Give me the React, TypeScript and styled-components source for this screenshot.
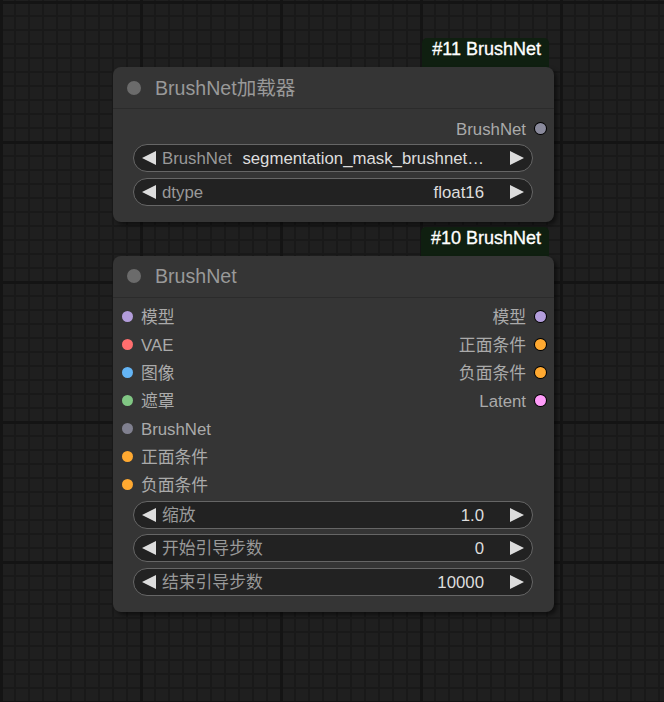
import React from "react"
import styled, { createGlobalStyle } from "styled-components"

const FONT = `"Liberation Sans", Arial, "Noto Sans CJK SC", sans-serif`

type SlotInfo = { name: string; color: string }
type WidgetInfo = { label: string; value: string }

type NodeInfo = {
    id: number
    badge: string
    title: string
    inputs: SlotInfo[]
    outputs: SlotInfo[]
    widgets: WidgetInfo[]
}

const nodes: NodeInfo[] = [
    {
        id: 11,
        badge: "BrushNet",
        title: "BrushNet加载器",
        inputs: [],
        outputs: [{ name: "BrushNet", color: "#8a8a9c" }],
        widgets: [
            { label: "BrushNet", value: "segmentation_mask_brushnet…" },
            { label: "dtype", value: "float16" },
        ],
    },
    {
        id: 10,
        badge: "BrushNet",
        title: "BrushNet",
        inputs: [
            { name: "模型", color: "#b39ddb" },
            { name: "VAE", color: "#ff6e6e" },
            { name: "图像", color: "#64b5f6" },
            { name: "遮罩", color: "#81c784" },
            { name: "BrushNet", color: "#80808f" },
            { name: "正面条件", color: "#ffa931" },
            { name: "负面条件", color: "#ffa931" },
        ],
        outputs: [
            { name: "模型", color: "#b39ddb" },
            { name: "正面条件", color: "#ffa931" },
            { name: "负面条件", color: "#ffa931" },
            { name: "Latent", color: "#ff9cf9" },
        ],
        widgets: [
            { label: "缩放", value: "1.0" },
            { label: "开始引导步数", value: "0" },
            { label: "结束引导步数", value: "10000" },
        ],
    },
]

const Arrow = ({ dir }: { dir: "left" | "right" }) => (
    <ArrowIcon width="14" height="14" viewBox="0 0 14 14">
        <polygon points={dir === "left" ? "14,0 0,7 14,14" : "0,0 14,7 0,14"} fill="#ddd" />
    </ArrowIcon>
)

const GraphNode = ({ node }: { node: NodeInfo }) => (
    <NodeGroup>
        <Badge>#{node.id} {node.badge}</Badge>
        <NodeCard>
            <TitleBar>
                <TitleDot />
                <TitleText>{node.title}</TitleText>
            </TitleBar>
            <NodeBody>
                <SlotGrid>
                    <SlotColumn>
                        {node.inputs.map((s, i) => (
                            <InputSlot key={i}>
                                <SlotDot $color={s.color} />
                                <SlotLabel>{s.name}</SlotLabel>
                            </InputSlot>
                        ))}
                    </SlotColumn>
                    <SlotColumn>
                        {node.outputs.map((s, i) => (
                            <OutputSlot key={i}>
                                <SlotLabel>{s.name}</SlotLabel>
                                <SlotDot $color={s.color} $output />
                            </OutputSlot>
                        ))}
                    </SlotColumn>
                </SlotGrid>
                <WidgetList>
                    {node.widgets.map((w, i) => (
                        <Widget key={i}>
                            <Arrow dir="left" />
                            <WidgetLabel>{w.label}</WidgetLabel>
                            <WidgetValue>{w.value}</WidgetValue>
                            <Arrow dir="right" />
                        </Widget>
                    ))}
                </WidgetList>
            </NodeBody>
        </NodeCard>
    </NodeGroup>
)

export default function App() {
    return (
        <>
            <GlobalStyle />
            <Canvas>
                <NodeStack>
                    {nodes.map((n) => (
                        <GraphNode key={n.id} node={n} />
                    ))}
                </NodeStack>
            </Canvas>
        </>
    )
}

const GlobalStyle = createGlobalStyle`
    html, body {
        margin: 0;
        padding: 0;
        background: #1f1f1f;
    }
`

const Canvas = styled.div`
    width: 664px;
    height: 702px;
    overflow: hidden;
    box-sizing: border-box;
    padding: 38px 0 0 113px;

    font-family: ${FONT};

    background-color: #1f1f1f;
    background-image:
        linear-gradient(to right, #141414 3px, transparent 3px),
        linear-gradient(to bottom, #141414 3px, transparent 3px),
        linear-gradient(to right, #191919 2px, transparent 2px),
        linear-gradient(to bottom, #191919 2px, transparent 2px);
    background-size: 140px 140px, 140px 140px, 14px 14px, 14px 14px;
    background-position: 0 0, 0 1px, 0 0, 0 1px;
`

const NodeStack = styled.div`
    display: flex;
    flex-direction: column;
    gap: 5px;
    width: 441px;
`

const NodeGroup = styled.div`
    position: relative;
    padding-top: 29px;
`

const Badge = styled.div`
    position: absolute;
    top: 0;
    right: 5px;
    height: 40px;
    padding: 0 8px 0 10px;
    box-sizing: border-box;

    border-radius: 5px;
    background: #0f1f10;

    color: #fff;
    font-size: 18px;
    line-height: 22px;
    white-space: nowrap;
    -webkit-text-stroke: 0.3px #fff;
`

const NodeCard = styled.div`
    position: relative;
    border-radius: 8px;
    background: #353535;
    box-shadow: 3px 3px 4px rgba(0, 0, 0, 0.5);
`

const TitleBar = styled.div`
    display: flex;
    align-items: center;
    height: 41px;
    border-bottom: 1px solid #2b2b2b;
`

const TitleDot = styled.span`
    width: 14px;
    height: 14px;
    margin-left: 14px;
    border-radius: 50%;
    background: #6b6b6b;
`

const TitleText = styled.span`
    margin-left: 14px;
    color: #999;
    font-size: 19.6px;
    line-height: 22px;
    white-space: nowrap;
`

const NodeBody = styled.div`
    display: flex;
    flex-direction: column;
    gap: 2px;
    padding: 5px 0 16px;
`

const SlotGrid = styled.div`
    display: grid;
    grid-template-columns: 1fr 1fr;
`

const SlotColumn = styled.div`
    display: flex;
    flex-direction: column;
`

const InputSlot = styled.div`
    display: flex;
    align-items: center;
    gap: 8.5px;
    height: 28px;
    padding-left: 8.5px;
`

const OutputSlot = styled(InputSlot)`
    justify-content: flex-end;
    padding-left: 0;
    padding-right: 8.5px;
`

const SlotDot = styled.span<{ $color: string; $output?: boolean }>`
    flex: none;
    width: 11px;
    height: 11px;
    border-radius: 50%;
    background: ${(p) => p.$color};
    box-shadow: ${(p) => (p.$output ? "0 0 0 1px #000" : "none")};
`

const SlotLabel = styled.span`
    padding-top: 3px;
    color: #aaa;
    font-size: 16.8px;
    line-height: 20px;
    white-space: nowrap;
`

const WidgetList = styled.div`
    display: flex;
    flex-direction: column;
    gap: 5.5px;
    padding: 0 21px 0 20px;
`

const Widget = styled.div`
    display: flex;
    align-items: center;
    height: 28px;
    box-sizing: border-box;
    padding: 0 8px 0 7.5px;

    border: 1px solid #666;
    border-radius: 14px;
    background: #222;

    font-size: 16.8px;
    line-height: 20px;
    white-space: nowrap;
`

const ArrowIcon = styled.svg`
    flex: none;
    display: block;
`

const WidgetLabel = styled.span`
    margin-left: 6.5px;
    padding-top: 2px;
    color: #999;
`

const WidgetValue = styled.span`
    margin-left: auto;
    margin-right: 26px;
    padding: 2px 0 0 10px;
    color: #ddd;
`
